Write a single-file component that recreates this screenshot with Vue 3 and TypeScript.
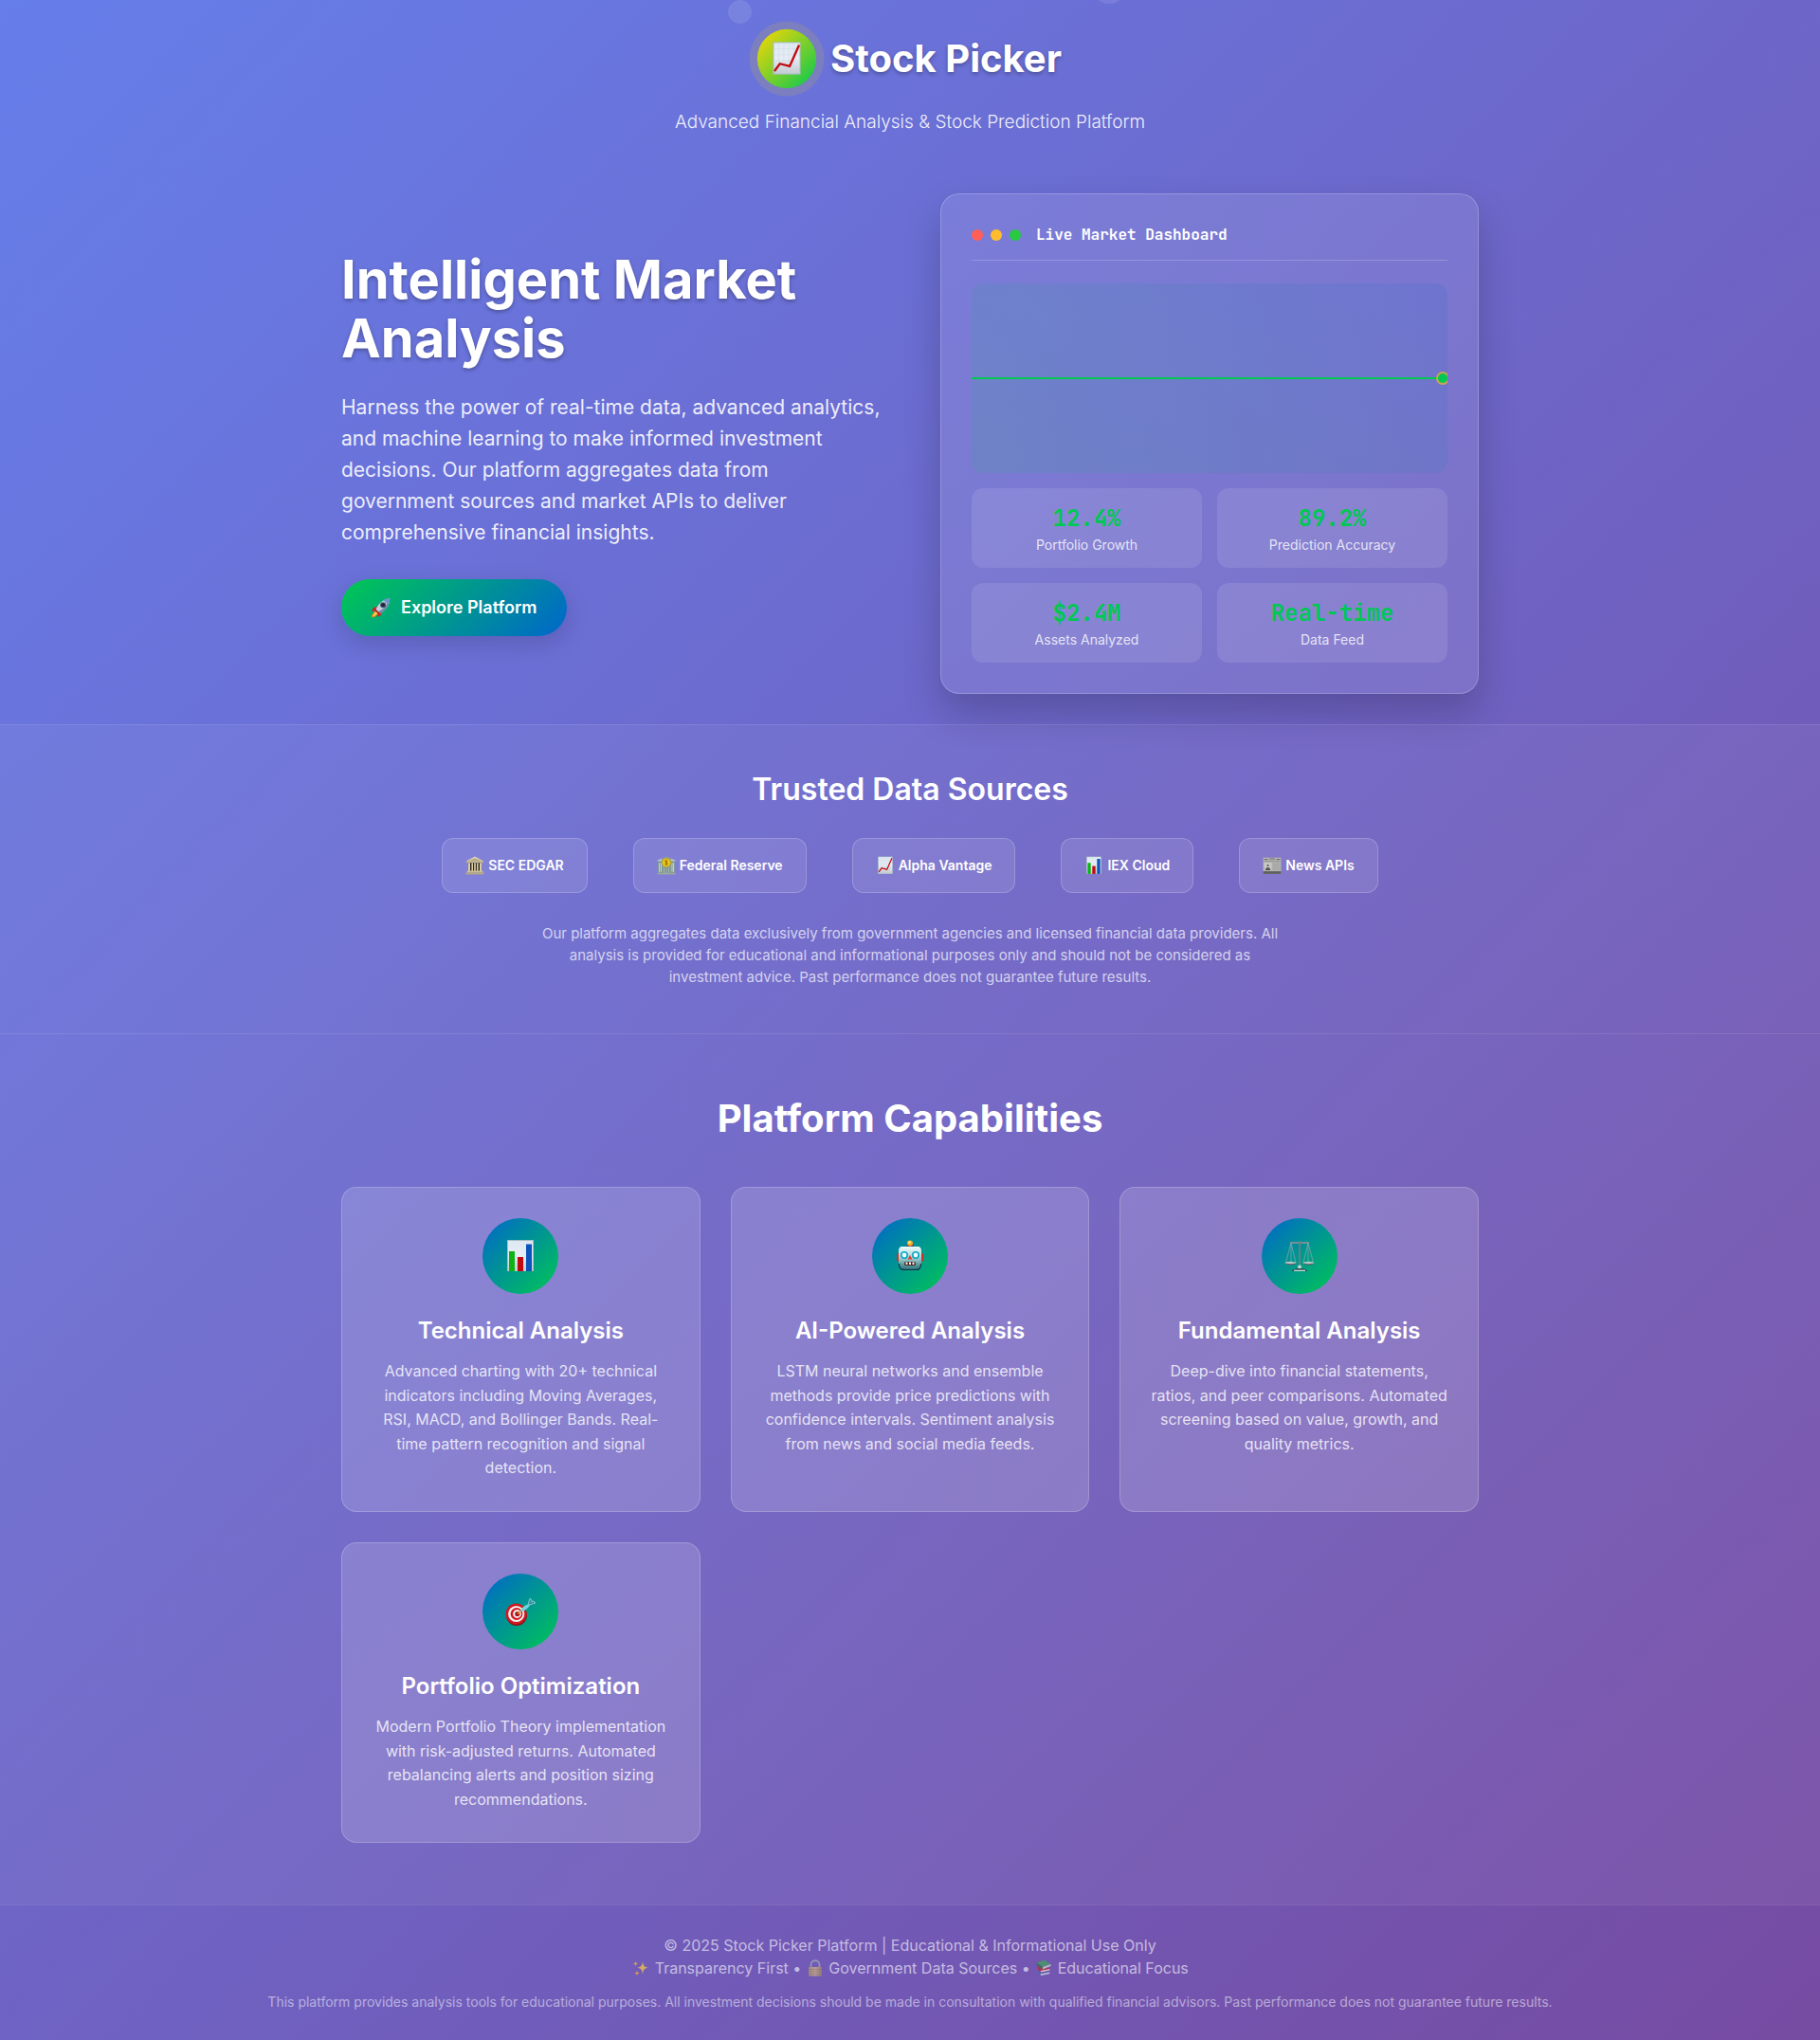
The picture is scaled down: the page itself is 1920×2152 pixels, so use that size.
<script setup lang="ts">
interface Stat {
  value: string
  label: string
}

interface Source {
  icon: string
  name: string
}

interface Feature {
  icon: string
  title: string
  text: string
}

const stats: Stat[] = [
  { value: '12.4%', label: 'Portfolio Growth' },
  { value: '89.2%', label: 'Prediction Accuracy' },
  { value: '$2.4M', label: 'Assets Analyzed' },
  { value: 'Real-time', label: 'Data Feed' },
]

const sources: Source[] = [
  { icon: 'temple', name: 'SEC EDGAR' },
  { icon: 'bank', name: 'Federal Reserve' },
  { icon: 'trend', name: 'Alpha Vantage' },
  { icon: 'bars', name: 'IEX Cloud' },
  { icon: 'news', name: 'News APIs' },
]

const features: Feature[] = [
  {
    icon: 'bars',
    title: 'Technical Analysis',
    text: 'Advanced charting with 20+ technical indicators including Moving Averages, RSI, MACD, and Bollinger Bands. Real-time pattern recognition and signal detection.',
  },
  {
    icon: 'robot',
    title: 'AI-Powered Analysis',
    text: 'LSTM neural networks and ensemble methods provide price predictions with confidence intervals. Sentiment analysis from news and social media feeds.',
  },
  {
    icon: 'scales',
    title: 'Fundamental Analysis',
    text: 'Deep-dive into financial statements, ratios, and peer comparisons. Automated screening based on value, growth, and quality metrics.',
  },
  {
    icon: 'target',
    title: 'Portfolio Optimization',
    text: 'Modern Portfolio Theory implementation with risk-adjusted returns. Automated rebalancing alerts and position sizing recommendations.',
  },
]
</script>

<template>
  <div class="page">
    <svg class="sprite" aria-hidden="true">
      <defs>
        <linearGradient id="paper" x1="0" y1="0" x2="0" y2="1">
          <stop offset="0" stop-color="#dfe9f2" />
          <stop offset="0.5" stop-color="#e6ecf5" />
          <stop offset="1" stop-color="#c3cad0" />
        </linearGradient>
        <linearGradient id="stone" x1="0" y1="0" x2="0" y2="1">
          <stop offset="0" stop-color="#e2d9ba" />
          <stop offset="1" stop-color="#b8ac8a" />
        </linearGradient>
        <linearGradient id="metal" x1="0" y1="0" x2="0" y2="1">
          <stop offset="0" stop-color="#eefcfc" />
          <stop offset="0.45" stop-color="#a9d3d6" />
          <stop offset="1" stop-color="#256f77" />
        </linearGradient>
        <linearGradient id="brass" x1="0" y1="0" x2="1" y2="0">
          <stop offset="0" stop-color="#b39a6b" />
          <stop offset="0.5" stop-color="#d9c08d" />
          <stop offset="1" stop-color="#a08658" />
        </linearGradient>
      </defs>

      <symbol id="trend" viewBox="0 0 36 36">
        <rect x="4" y="1" width="28" height="33" fill="#a9bcc6" />
        <rect x="5" y="2" width="26" height="31" fill="url(#paper)" />
        <path d="M10 2v31M15 2v31M20 2v31M25 2v31M5 8h26M5 14h26M5 20h26M5 26h26" stroke="#cdd8e4" stroke-width=".5" />
        <path d="M5.500 30.500L11 23l10 2.500L30.500 4" fill="none" stroke="#c3090f" stroke-width="2.200" />
      </symbol>

      <symbol id="bars" viewBox="0 0 36 36">
        <rect x="4" y="1" width="28" height="33" fill="#a9bcc6" />
        <rect x="5" y="2" width="26" height="32" fill="url(#paper)" />
        <rect x="6" y="13" width="6" height="21" fill="#0db313" />
        <rect x="15" y="19" width="6" height="15" fill="#bf0a10" />
        <rect x="24" y="5.500" width="6" height="28.500" fill="#0b53bd" />
      </symbol>

      <symbol id="rocket" viewBox="0 0 36 36">
        <path d="M11 16L4 19l-2 6 8-2zM19 24l-2 8-6 2 2-8z" fill="#d3202a" />
        <path d="M8 23l-6 8 0 4 5-1 7-6z" fill="#f08a1d" />
        <path d="M9 25l-5 7 1 1 7-5z" fill="#ffe04a" />
        <path d="M33 2C22 3 14 10 9 21l6 7C26 23 33 14 33 2z" fill="#c3d3e4" />
        <path d="M33 2C33 14 26 23 15 28l-2-3C23 20 30 12 33 2z" fill="#7487a8" />
        <path d="M33 2c-4 0-8 1-11 3l8 8c2-3 3-7 3-11z" fill="#6f93c8" />
        <circle cx="21.500" cy="13.500" r="5" fill="#48546d" />
        <circle cx="21.500" cy="13.500" r="3" fill="#1c2233" />
        <path d="M8 20l8 8-2 2-8-8z" fill="#b31d28" />
      </symbol>

      <symbol id="temple" viewBox="0 0 36 36">
        <path d="M18 1L2 9v4h32V9z" fill="url(#stone)" />
        <path d="M18 4L8 9.500h20z" fill="#b5aa88" />
        <rect x="5" y="13" width="26" height="16" fill="#2c2416" />
        <path d="M5 13h4v16H5zM11.500 13h3v16h-3zM16.500 13h3v16h-3zM21.500 13h3v16h-3zM27 13h4v16h-4z" fill="#d8cda9" />
        <rect x="3" y="28" width="30" height="3" fill="#cbbf9b" />
        <rect x="1" y="31" width="34" height="4" fill="#b5a985" />
      </symbol>

      <symbol id="bank" viewBox="0 0 36 36">
        <path d="M9 5l9-4 9 4v29H9z" fill="#8fa39c" />
        <rect x="2" y="10" width="8" height="23" fill="#7f9794" />
        <rect x="26" y="10" width="8" height="23" fill="#7f9794" />
        <path d="M4 13h1.500v17H4zM7 13h1.500v17H7zM28 13h1.500v17H28zM31 13h1.500v17H31z" fill="#d2e0dc" />
        <path d="M1 8l8-3v5H1zM35 8l-8-3v5h8z" fill="#b8c7c1" />
        <rect x="12" y="23" width="12" height="11" fill="#47605f" />
        <path d="M13 23h2v11h-2zM17 23h2v11h-2zM21 23h2v11h-2z" fill="#cfddd8" />
        <circle cx="18" cy="12.500" r="8.500" fill="#c9a000" />
        <circle cx="18" cy="12.500" r="7.200" fill="#ecc916" />
        <path d="M20.500 10c-1-2-5-2-5 .5 0 2.500 5 1.500 5 4 0 2.500-4.500 2.500-5.500 .5M18 7.500v10" fill="none" stroke="#7a5c00" stroke-width="1.300" />
        <rect x="1" y="32" width="34" height="3" fill="#9aa9a2" />
      </symbol>

      <symbol id="news" viewBox="0 0 36 36">
        <rect x="1" y="3" width="34" height="31" fill="#b4b4b1" />
        <rect x="1" y="29" width="34" height="5" fill="#5f5f5f" />
        <path d="M3 6.500h7M13 5.500h10M26 6.500h7" stroke="#5c5c5c" stroke-width="1.500" />
        <path d="M3 10h30" stroke="#7b7b7b" />
        <rect x="3" y="13" width="14" height="14" fill="#c9c9c6" />
        <circle cx="10" cy="18" r="2" fill="#555" />
        <path d="M5 27c0-7 10-7 10 0z" fill="#555" />
        <path d="M19 14h14M19 17h14M19 20h14M19 23h14M19 26h14" stroke="#989895" stroke-width="1" />
      </symbol>

      <symbol id="robot" viewBox="0 0 36 36">
        <path d="M14 9h8l-1-4h-6z" fill="#5b3a78" />
        <circle cx="18" cy="4.500" r="3" fill="#f7a71b" />
        <circle cx="17.500" cy="3.500" r="1.500" fill="#ffe27a" />
        <rect x="4" y="15" width="4" height="9" rx="2" fill="#c8312c" />
        <rect x="28" y="15" width="4" height="9" rx="2" fill="#c8312c" />
        <path d="M10 8h16c3 0 4 2 4 5v13c0 5-2 7-5 7H11c-3 0-5-2-5-7V13c0-3 1-5 4-5z" fill="url(#metal)" />
        <path d="M6.500 26c0 5 2 6.500 5 6.500h13c3 0 5-1.500 5-6.500" fill="none" stroke="#0c343d" stroke-width="1.200" />
        <circle cx="12" cy="17" r="4" fill="#0ba7c4" />
        <circle cx="24" cy="17" r="4" fill="#0ba7c4" />
        <circle cx="12" cy="17" r="2.400" fill="#effeff" />
        <circle cx="24" cy="17" r="2.400" fill="#effeff" />
        <path d="M18 17l2.500 4.500h-5z" fill="#df3f31" />
        <rect x="12" y="24" width="12" height="4" rx="1.500" fill="#4a2420" />
        <path d="M13.500 24.500h2V27h-2zM17 24.500h2V27h-2zM20.500 24.500h2V27h-2z" fill="#f3f3ee" />
      </symbol>

      <symbol id="scales" viewBox="0 0 36 36">
        <path d="M8 4h20" stroke="#7e9297" stroke-width="1.800" />
        <path d="M18 2v29" stroke="#6f7d84" stroke-width="1.800" />
        <path d="M9 4L3.500 25M9 4l5 21M9 4v21M27 4l-5 21M27 4l5.500 21M27 4v21" stroke="#7fa7ab" stroke-width=".8" fill="none" />
        <path d="M2.500 25h12c-1 3.500-11 3.500-12 0zM21.500 25h12c-1 3.500-11 3.500-12 0z" fill="#56666b" />
        <ellipse cx="8.500" cy="25" rx="6" ry="1.200" fill="#b7c7c8" />
        <ellipse cx="27.500" cy="25" rx="6" ry="1.200" fill="#b7c7c8" />
        <ellipse cx="18" cy="29.500" rx="2" ry="2" fill="#c9d4d4" />
        <path d="M10 34c0-2 4-3 8-3s8 1 8 3z" fill="#37494e" />
        <path d="M12 33.300h12" stroke="#d7e6e6" stroke-width="1.200" />
      </symbol>

      <symbol id="target" viewBox="0 0 36 36">
        <circle cx="14" cy="22" r="11" fill="#8f1017" />
        <circle cx="13.500" cy="20.500" r="11" fill="#cf1a22" />
        <circle cx="13.700" cy="20.500" r="8.600" fill="#f5f1ee" />
        <circle cx="14" cy="20.500" r="6.400" fill="#cf1a22" />
        <circle cx="14.500" cy="20.500" r="4.400" fill="#f5f1ee" />
        <circle cx="14.800" cy="20.500" r="2.600" fill="#a7151c" />
        <path d="M15 20.500l5-4" stroke="#d8a52b" stroke-width="1.500" />
        <path d="M18 18c1-4 4-6 9-8l1 1.500c-3 4-6 6.500-10 6.500z" fill="#74d4dd" />
        <path d="M26 11l2-7 2 2 0 2M27 11l7-2-2-2-2 1" fill="#3f8d9d" stroke="#7cc7cf" />
      </symbol>

      <symbol id="sparkles" viewBox="0 0 36 36">
        <path d="M22 3c1 10 3 13 12 14.500C25 19 23 22 22 33c-1-11-3-14-12-15.500C19 16 21 13 22 3z" fill="#ffcb3d" />
        <path d="M7 3c.5 4 1.500 5 5 6-3.500 1-4.500 2-5 6-.5-4-1.500-5-5-6 3.500-1 4.500-2 5-6zM10 23c.5 4 1.500 5 5 6-3.500 1-4.500 2-5 6-.5-4-1.500-5-5-6 3.500-1 4.500-2 5-6z" fill="#ffb52c" />
      </symbol>

      <symbol id="lock" viewBox="0 0 36 36">
        <path d="M9 18v-7a9 8.500 0 0 1 18 0v7" fill="none" stroke="#9fb0b5" stroke-width="3.600" />
        <rect x="4" y="16" width="28" height="19" rx="1.500" fill="url(#brass)" />
        <path d="M4 21h28M4 26h28M4 31h28" stroke="#8c744a" stroke-width="1" />
      </symbol>

      <symbol id="books" viewBox="0 0 36 36">
        <path d="M6 26l20-3 5 7-18 5-7-4z" fill="#4965a8" />
        <path d="M10 31l20-4 1 3-18 4z" fill="#e9e4ec" />
        <path d="M4 15l20-1 9 8-20 5-6-4z" fill="#c9232f" />
        <path d="M11 24l20-4v3l-18 4z" fill="#f0e8ea" />
        <path d="M3 7L20 1l13 9-17 6z" fill="#3fa35c" />
        <path d="M3 7l13 9v5L3 12z" fill="#267a41" />
        <path d="M16 16l17-6v4l-17 7z" fill="#cfdccd" />
      </symbol>
    </svg>

    <div class="bubbles" aria-hidden="true">
      <span class="bubble bubble-small"></span>
      <span class="bubble bubble-large"></span>
    </div>

    <header class="header">
      <div class="brand">
        <span class="brand-mark">
          <svg class="icon" aria-hidden="true"><use href="#trend" /></svg>
        </span>
        <h1>Stock Picker</h1>
      </div>
      <p class="tagline">Advanced Financial Analysis &amp; Stock Prediction Platform</p>
    </header>

    <main>
      <section class="hero">
        <div class="hero-copy">
          <h2>Intelligent Market Analysis</h2>
          <p>
            Harness the power of real-time data, advanced analytics, and machine learning to make
            informed investment decisions. Our platform aggregates data from government sources and
            market APIs to deliver comprehensive financial insights.
          </p>
          <a class="cta" href="#features">
            <svg class="cta-icon" aria-hidden="true"><use href="#rocket" /></svg>
            <span>Explore Platform</span>
          </a>
        </div>

        <div class="dashboard">
          <div class="dashboard-head">
            <span class="dot dot-red"></span>
            <span class="dot dot-amber"></span>
            <span class="dot dot-green"></span>
            <span class="dashboard-title">Live Market Dashboard</span>
          </div>
          <div class="chart">
            <div class="chart-line"></div>
            <div class="chart-point"></div>
          </div>
          <div class="stats">
            <div v-for="stat in stats" :key="stat.label" class="stat">
              <div class="stat-value">{{ stat.value }}</div>
              <div class="stat-label">{{ stat.label }}</div>
            </div>
          </div>
        </div>
      </section>

      <section class="sources">
        <h2>Trusted Data Sources</h2>
        <ul class="source-list">
          <li v-for="source in sources" :key="source.name">
            <svg class="icon-small" aria-hidden="true"><use :href="'#' + source.icon" /></svg>
            <span>{{ source.name }}</span>
          </li>
        </ul>
        <p>
          Our platform aggregates data exclusively from government agencies and licensed financial
          data providers. All analysis is provided for educational and informational purposes only
          and should not be considered as investment advice. Past performance does not guarantee
          future results.
        </p>
      </section>

      <section id="features" class="features">
        <h2>Platform Capabilities</h2>
        <div class="feature-grid">
          <article v-for="feature in features" :key="feature.title" class="feature">
            <div class="feature-icon">
              <svg class="icon" aria-hidden="true"><use :href="'#' + feature.icon" /></svg>
            </div>
            <h3>{{ feature.title }}</h3>
            <p>{{ feature.text }}</p>
          </article>
        </div>
      </section>
    </main>

    <footer class="footer">
      <p>© 2025 Stock Picker Platform | Educational &amp; Informational Use Only</p>
      <p>
        <svg class="icon-small" aria-hidden="true"><use href="#sparkles" /></svg>
        Transparency First •
        <svg class="icon-small" aria-hidden="true"><use href="#lock" /></svg>
        Government Data Sources •
        <svg class="icon-small" aria-hidden="true"><use href="#books" /></svg>
        Educational Focus
      </p>
      <p class="fine-print">
        This platform provides analysis tools for educational purposes. All investment decisions
        should be made in consultation with qualified financial advisors. Past performance does not
        guarantee future results.
      </p>
    </footer>
  </div>
</template>

<style>
body {
  margin: 0;
}
</style>

<style scoped>
.page {
  position: relative;
  display: flex;
  flex-direction: column;
  min-height: 100vh;
  overflow: hidden;
  color: #fff;
  font-family: Inter, "Liberation Sans", sans-serif;
  background: linear-gradient(135deg, #667eea 0%, #764ba2 100%);
}

h1,
h2,
h3,
p,
ul {
  margin: 0;
  padding: 0;
}

.sprite {
  position: absolute;
  width: 0;
  height: 0;
}

.icon {
  width: 36px;
  height: 36px;
}

.icon-small {
  flex: none;
  width: 20px;
  height: 20px;
}

.bubble {
  position: absolute;
  border-radius: 50%;
  background: rgba(255, 255, 255, 0.1);
}

.bubble-small {
  top: 0;
  left: 40%;
  width: 25px;
  height: 25px;
}

.bubble-large {
  top: -32px;
  left: 60%;
  width: 36px;
  height: 36px;
}

.header {
  position: relative;
  padding: 32px 32px 0;
  text-align: center;
}

.brand {
  display: flex;
  align-items: center;
  justify-content: center;
  gap: 16px;
  margin-bottom: 25px;
}

.brand-mark {
  display: flex;
  align-items: center;
  justify-content: center;
  width: 60px;
  height: 60px;
  border-radius: 50%;
  background: linear-gradient(135deg, #ffd700, #00c853);
  box-shadow: 0 0 0 8px rgba(255, 215, 0, 0.12);
  transform: scale(1.04);
}

.brand h1 {
  font-size: 40px;
  font-weight: 700;
  line-height: 48px;
  text-shadow: 0 2px 4px rgba(0, 0, 0, 0.3);
}

.tagline {
  font-size: 19px;
  font-weight: 300;
  line-height: 24px;
  color: rgba(255, 255, 255, 0.9);
}

.hero {
  display: grid;
  grid-template-columns: minmax(0, 576fr) minmax(0, 568fr);
  align-items: center;
  gap: 56px;
  max-width: 1200px;
  margin: 0 auto;
  padding: 63px 32px 32px;
}

.hero-copy {
  padding-bottom: 2px;
}

.hero-copy h2 {
  margin-bottom: 25px;
  font-size: 56px;
  font-weight: 700;
  line-height: 62px;
  text-shadow: 0 2px 4px rgba(0, 0, 0, 0.3);
}

.hero-copy p {
  max-width: 572px;
  margin-bottom: 33px;
  font-size: 21px;
  line-height: 33px;
  color: rgba(255, 255, 255, 0.9);
}

.cta {
  display: inline-flex;
  align-items: center;
  gap: 10px;
  height: 60px;
  padding: 0 31px;
  border-radius: 50px;
  color: #fff;
  font-size: 18px;
  font-weight: 600;
  text-decoration: none;
  vertical-align: top;
  background: linear-gradient(135deg, #00c853, #0066cc);
  box-shadow: 0 8px 24px rgba(0, 0, 0, 0.15);
}

.cta-icon {
  width: 22px;
  height: 22px;
}

.dashboard {
  padding: 32px;
  border: 1px solid rgba(255, 255, 255, 0.2);
  border-radius: 20px;
  background: rgba(255, 255, 255, 0.1);
  box-shadow: 0 20px 40px rgba(0, 0, 0, 0.2);
}

.dashboard-head {
  display: flex;
  align-items: center;
  gap: 8px;
  margin-bottom: 24px;
  padding-bottom: 16px;
  border-bottom: 1px solid rgba(255, 255, 255, 0.2);
}

.dot {
  width: 12px;
  height: 12px;
  border-radius: 50%;
}

.dot-red {
  background: #ff5f57;
}

.dot-amber {
  background: #ffbd2e;
}

.dot-green {
  background: #28ca42;
}

.dashboard-title {
  margin-left: 8px;
  font-family: "JetBrains Mono", "DejaVu Sans Mono", monospace;
  font-size: 16px;
  font-weight: 600;
  line-height: 21px;
}

.chart {
  position: relative;
  display: flex;
  align-items: center;
  height: 200px;
  margin-bottom: 16px;
  overflow: hidden;
  border-radius: 12px;
  background: linear-gradient(45deg, rgba(0, 200, 83, 0.1), rgba(0, 102, 204, 0.1));
}

.chart-line {
  width: 100%;
  height: 2px;
  background: #00c853;
}

.chart-point {
  position: absolute;
  right: 0;
  width: 10px;
  height: 10px;
  border-radius: 50%;
  background: #00c853;
  box-shadow: 0 0 0 2px rgba(255, 193, 7, 0.6);
}

.stats {
  display: grid;
  grid-template-columns: 1fr 1fr;
  gap: 16px;
}

.stat {
  padding: 16px;
  border-radius: 12px;
  text-align: center;
  background: rgba(255, 255, 255, 0.1);
}

.stat-value {
  font-family: "JetBrains Mono", "DejaVu Sans Mono", monospace;
  font-size: 24px;
  font-weight: 700;
  line-height: 32px;
  color: #00c853;
}

.stat-label {
  margin-top: 4px;
  font-size: 14px;
  line-height: 16px;
  color: rgba(255, 255, 255, 0.8);
}

.sources {
  padding: 48px 32px;
  border-top: 1px solid rgba(255, 255, 255, 0.1);
  border-bottom: 1px solid rgba(255, 255, 255, 0.1);
  text-align: center;
  background: rgba(255, 255, 255, 0.05);
}

.sources h2 {
  margin-bottom: 32px;
  font-size: 32px;
  font-weight: 600;
  line-height: 39px;
}

.source-list {
  display: flex;
  flex-wrap: wrap;
  justify-content: center;
  gap: 48px;
  margin-bottom: 31px;
  list-style: none;
}

.source-list li {
  display: flex;
  align-items: center;
  gap: 4px;
  padding: 18px 24px;
  border: 1px solid rgba(255, 255, 255, 0.2);
  border-radius: 12px;
  font-size: 14px;
  font-weight: 600;
  line-height: 20px;
  background: rgba(255, 255, 255, 0.1);
}

.sources p {
  max-width: 800px;
  margin: 0 auto;
  font-size: 15px;
  line-height: 23px;
  color: rgba(255, 255, 255, 0.7);
}

.features {
  padding: 64px 32px 65px;
  background: rgba(255, 255, 255, 0.05);
}

.features h2 {
  margin-bottom: 48px;
  font-size: 40px;
  font-weight: 700;
  line-height: 49px;
  text-align: center;
}

.feature-grid {
  display: grid;
  grid-template-columns: repeat(auto-fit, minmax(300px, 1fr));
  gap: 32px;
  max-width: 1200px;
  margin: 0 auto;
}

.feature {
  padding: 32px;
  border: 1px solid rgba(255, 255, 255, 0.2);
  border-radius: 16px;
  text-align: center;
  background: rgba(255, 255, 255, 0.15);
}

.feature-icon {
  display: flex;
  align-items: center;
  justify-content: center;
  width: 80px;
  height: 80px;
  margin: 0 auto 24px;
  border-radius: 50%;
  background: linear-gradient(135deg, #0066cc, #00c853);
}

.feature h3 {
  margin-bottom: 16px;
  font-size: 24px;
  font-weight: 600;
  line-height: 29px;
}

.feature p {
  font-size: 16px;
  line-height: 1.6;
  color: rgba(255, 255, 255, 0.8);
}

.footer {
  flex: 1;
  padding: 30px 32px;
  border-top: 1px solid rgba(255, 255, 255, 0.1);
  font-size: 16px;
  line-height: 24px;
  text-align: center;
  color: rgba(255, 255, 255, 0.6);
}

.footer .icon-small {
  height: 18px;
  opacity: 0.7;
  vertical-align: -3px;
}

.footer .fine-print {
  margin-top: 15px;
  font-size: 14px;
  line-height: 18px;
  color: rgba(255, 255, 255, 0.5);
}
</style>
